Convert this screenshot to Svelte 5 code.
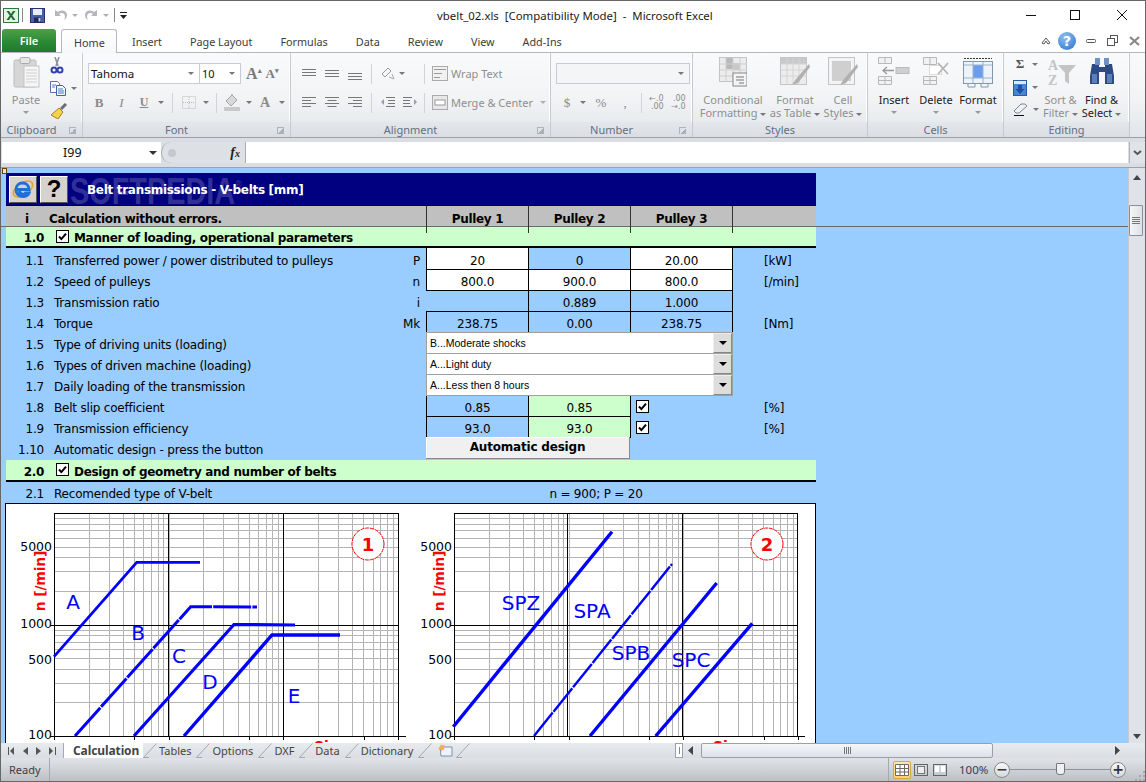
<script>
  const rows = [
    { n: '1.1', t: 'Transferred power / power distributed to pulleys', s: 'P', cells: [['20', 'w'], ['0', 'b'], ['20.00', 'w']], u: '[kW]' },
    { n: '1.2', t: 'Speed of pulleys', s: 'n', cells: [['800.0', 'w'], ['900.0', 'w'], ['800.0', 'w']], u: '[/min]' },
    { n: '1.3', t: 'Transmission ratio', s: 'i', cells: [['', 'x'], ['0.889', 'b'], ['1.000', 'b']], u: '' },
    { n: '1.4', t: 'Torque', s: 'Mk', cells: [['238.75', 'b'], ['0.00', 'b'], ['238.75', 'b']], u: '[Nm]' },
    { n: '1.5', t: 'Type of driving units (loading)', drop: 'B...Moderate shocks' },
    { n: '1.6', t: 'Types of driven machine (loading)', drop: 'A...Light duty' },
    { n: '1.7', t: 'Daily loading of the transmission', drop: 'A...Less then 8 hours' },
    { n: '1.8', t: 'Belt slip coefficient', cells: [['0.85', 'b'], ['0.85', 'g']], check: true, u: '[%]' },
    { n: '1.9', t: 'Transmission efficiency', cells: [['93.0', 'b'], ['93.0', 'g']], check: true, u: '[%]' },
    { n: '1.10', t: 'Automatic design - press the button', btn: 'Automatic design' }
  ]

  const tabs = ['Insert', 'Page Layout', 'Formulas', 'Data', 'Review', 'View', 'Add-Ins']
  const sheets = ['Tables', 'Options', 'DXF', 'Data', 'Dictionary']

  // log-log chart grid, page coordinates
  const TOP = 513
  const BOTTOM = 736
  const DECADE = 114.67
  const yOf = (n) => Math.round(BOTTOM - 111.5 * Math.log10(n / 100)) + 0.5
  const hLines = []
  for (const base of [100, 1000]) {
    for (let k = 1; k < 10; k++) hLines.push(yOf(base * k))
  }
  const vLines = (left) => {
    const out = []
    for (let d = 0; d < 3; d++) {
      for (let k = 1; k < 10; k++) out.push(Math.round(left + DECADE * (d + Math.log10(k))) + 0.5)
    }
    return out
  }

  const charts = [
    {
      left: 54, right: 398, num: '1', nx: 40, cx: 368, majors: [168.5, 283.5],
      lines: [
        { p: '54,656.7 136.7,562.3 200,562.3', w: 2.8 },
        { p: '75,736 190.7,606.7 257,607', w: 3, dash: '38 1.2' },
        { p: '134,736 234,624.5 295,625', w: 3.2 },
        { p: '184,736 272,635 340,635', w: 3.4 }
      ],
      labels: [['A', 73, 609], ['B', 138, 640], ['C', 179, 663], ['D', 210, 689], ['E', 294, 703]],
      size: 314
    },
    {
      left: 454, right: 797, num: '2', nx: 439, cx: 767, majors: [567.5, 682.5],
      lines: [
        { p: '453.3,726.7 612,531.7', w: 3.4 },
        { p: '534,736 672,564', w: 2.4, dash: '30 1.2' },
        { p: '590,736 716.7,583', w: 3.4 },
        { p: '655.7,736 752.3,623.3', w: 3.4 }
      ],
      labels: [['SPZ', 521, 610], ['SPA', 592, 618], ['SPB', 631, 660], ['SPC', 691, 667]],
      size: 713
    }
  ]
</script>

{#snippet check()}
  <svg class="chk" width="13" height="13" viewBox="0 0 13 13"><rect x=".5" y=".5" width="12" height="12" fill="#fff" stroke="#000"/><path d="M3 6.500l2.400 2.600L10 3.600" fill="none" stroke="#000" stroke-width="2"/></svg>
{/snippet}

{#snippet slash()}
  <svg class="slash" width="14" height="15" viewBox="0 0 14 15"><path d="M0.500 14.500L13.500 .5M.5 14.500H6" fill="none" stroke="#a3a8af"/></svg>
{/snippet}

<div class="win">
  <header class="title">
    <div class="qat">
      <svg class="xl" width="16" height="15" viewBox="0 0 16 15"><rect x=".5" y=".5" width="15" height="14" fill="#e4f2e2" stroke="#2c7a3a"/><path d="M3.500 3h2.600l1.900 3 1.900-3h2.600L9.300 7.500l3.200 4.500H9.900l-1.900-3-1.900 3H3.500l3.200-4.500z" fill="#1c6f2d"/></svg>
      <i class="qsep"></i>
      <svg class="save" width="15" height="15" viewBox="0 0 15 15"><rect x=".5" y=".5" width="14" height="14" fill="#4a5fae" stroke="#27316e"/><rect x="3" y="1" width="9" height="6" fill="#e8edf6"/><rect x="4" y="9.500" width="7" height="5" fill="#202a5c"/><rect x="8.500" y="10" width="2" height="3.500" fill="#c7cce0"/></svg>
      <svg class="undo" width="13" height="12" viewBox="0 0 13 12"><path d="M1 1v6h6L5 5c3-2 6-.5 6 3 0 1-.5 2-1 3 2-1 3-3 3-5 0-4-5-6-9-3z" fill="#b4b8bd"/></svg>
      <b class="dd d1"></b>
      <svg class="redo" width="13" height="12" viewBox="0 0 13 12"><path d="M12 1v6H6l2-2c-3-2-6-.5-6 3 0 1 .5 2 1 3-2-1-3-3-3-5 0-4 5-6 9-3z" fill="#b4b8bd"/></svg>
      <b class="dd d2"></b>
      <i class="qsep s2"></i>
      <svg class="cust" width="7" height="7" viewBox="0 0 7 7"><path d="M0 0h7v1H0zM0 3h7L3.500 7z" fill="#222"/></svg>
    </div>
    <div class="caption">vbelt_02.xls&nbsp; [Compatibility Mode]&nbsp; -&nbsp; Microsoft Excel</div>
    <div class="winbtns">
      <svg width="12" height="12" viewBox="0 0 12 12"><path d="M1 6.500h10" stroke="#111"/></svg>
      <svg width="12" height="12" viewBox="0 0 12 12"><rect x="1.500" y="1.500" width="9" height="9" fill="none" stroke="#111"/></svg>
      <svg class="cls" width="12" height="12" viewBox="0 0 12 12"><path d="M1 1l10 10M11 1L1 11" stroke="#111"/></svg>
    </div>
  </header>

  <nav class="tabs">
    <div class="file">File</div>
    <div class="tab on">Home</div>
    {#each tabs as t}
      <div class="tab">{t}</div>
    {/each}
    <div class="helpbtns">
      <svg class="caret" width="10" height="8" viewBox="0 0 10 8"><path d="M1 6l4-5 4 5-2 1-2-3-2 3z" fill="none" stroke="#555"/></svg>
      <span class="help">?</span>
      <svg width="10" height="8" viewBox="0 0 10 8"><rect x=".5" y="2.500" width="9" height="3" rx="1" fill="none" stroke="#555"/></svg>
      <svg width="11" height="11" viewBox="0 0 11 11"><rect x="3.500" y=".5" width="7" height="7" fill="#fff" stroke="#555"/><rect x=".5" y="3.500" width="7" height="7" fill="#fff" stroke="#555"/></svg>
      <svg width="11" height="10" viewBox="0 0 11 10"><path d="M1 1l9 8M10 1L1 9" stroke="#888" stroke-width="2.200"/></svg>
    </div>
  </nav>

  <div class="ribbon">
    <section class="grp g-clip">
      <div class="body clipb">
        <div class="big">
          <div class="ico"><svg width="27" height="31" viewBox="0 0 27 31"><rect x="1" y="3" width="22" height="27" rx="1.500" fill="#d6d6d6" stroke="#bcbcbc"/><rect x="7" y="0.500" width="10" height="6" rx="1.500" fill="#e6e6e6" stroke="#aaa"/><rect x="11" y="9" width="15" height="21" fill="#f6f6f6" stroke="#c4c4c4"/><path d="M13 13h11M13 16h11M13 19h11M13 22h11M13 25h11" stroke="#cfcfcf"/></svg></div>
          <span class="dim">Paste</span>
          <b class="dd mt"></b>
        </div>
        <div class="smalls">
          <svg width="14" height="17" viewBox="0 0 14 17"><path d="M5 0l3 9M9 0L6 9" stroke="#8a8f96" stroke-width="1.500"/><circle cx="4" cy="13" r="2.500" fill="none" stroke="#3340b0" stroke-width="2"/><circle cx="10" cy="13" r="2.500" fill="none" stroke="#3340b0" stroke-width="2"/></svg>
          <span class="rowi"><svg width="16" height="15" viewBox="0 0 16 15"><path d="M.5 .5h7l2 2v9H.5z" fill="#fff" stroke="#5d6ea8"/><path d="M6.500 4.500h6l3 3v7h-9z" fill="#f2f6fd" stroke="#3a66a8"/><path d="M2 4h4M2 6h3M8 8h5M8 10h6M8 12h6" stroke="#4d7cc0"/></svg><b class="dd"></b></span>
          <svg width="17" height="16" viewBox="0 0 17 16"><path d="M9 5l4 4-5 7-7-4z" fill="#f4d24c" stroke="#a0842a"/><path d="M11 6l5-5" stroke="#6a6a7a" stroke-width="3"/></svg>
        </div>
      </div>
      <div class="glabel lp">Clipboard<i class="launch"></i></div>
    </section>

    <section class="grp g-font">
      <div class="body stack">
        <div class="fontrow">
          <div class="combo c-name"><span>Tahoma</span><b class="dd"></b></div>
          <div class="combo c-size"><span>10</span><b class="dd"></b></div>
          <span class="grow">A<sup>▴</sup></span>
          <span class="shrink">A<sup>▾</sup></span>
        </div>
        <div class="fontfx">
          <span class="fx b">B</span>
          <span class="fx i">I</span>
          <span class="fx u">U</span>
          <b class="dd"></b>
          <i class="vsep"></i>
          <svg width="14" height="13" viewBox="0 0 14 13"><rect x=".5" y=".5" width="13" height="12" fill="none" stroke="#bbb" stroke-dasharray="1 1"/><path d="M7 1v11M1 6.500h12" stroke="#bbb" stroke-dasharray="1 1"/></svg>
          <b class="dd"></b>
          <i class="vsep"></i>
          <svg width="18" height="17" viewBox="0 0 18 17"><path d="M3 7l6-6 5 5-6 6z" fill="#d9d9d9" stroke="#a5a5a5"/><path d="M9 1V0" stroke="#999"/><rect x="1" y="13" width="16" height="4" fill="#c9c9c9"/></svg>
          <b class="dd"></b>
          <span class="fx ac">A</span>
          <b class="dd"></b>
        </div>
      </div>
      <div class="glabel lp">Font<i class="launch"></i></div>
    </section>

    <section class="grp g-align">
      <div class="body aligngrid">
        <svg class="al" width="14" height="9" viewBox="0 0 14 9"><path d="M0 .5h14M0 3.500h14M0 6.500h14" stroke="#777"/></svg>
        <svg class="al" width="14" height="9" viewBox="0 0 14 9"><path d="M0 1.500h14M0 4.500h14M0 7.500h14" stroke="#777"/></svg>
        <svg class="al low" width="14" height="9" viewBox="0 0 14 9"><path d="M0 2.500h14M0 5.500h14M0 8.500h14" stroke="#777"/></svg>
        <i class="vsep"></i>
        <svg width="14" height="14" viewBox="0 0 14 14"><path d="M1 7l6-6 3 3-6 6z" fill="none" stroke="#999"/><path d="M8 10l5 2-2-5" fill="none" stroke="#aaa"/></svg>
        <b class="dd lft"></b>
        <i class="vsep"></i>
        <div class="inl dim"><svg width="16" height="15" viewBox="0 0 16 15"><rect x=".5" y=".5" width="15" height="14" fill="#f1f1f1" stroke="#aaa"/><path d="M2 3.500h12M2 7.500h8M2 11.500h6" stroke="#999"/></svg><span>Wrap Text</span></div>

        <svg class="al" width="14" height="11" viewBox="0 0 14 11"><path d="M0 .5h14M0 3.500h9M0 6.500h14M0 9.500h9" stroke="#777"/></svg>
        <svg class="al" width="14" height="11" viewBox="0 0 14 11"><path d="M0 .5h14M2.500 3.500h9M0 6.500h14M2.500 9.500h9" stroke="#777"/></svg>
        <svg class="al" width="14" height="11" viewBox="0 0 14 11"><path d="M0 .5h14M5 3.500h9M0 6.500h14M5 9.500h9" stroke="#777"/></svg>
        <i class="vsep"></i>
        <svg width="14" height="11" viewBox="0 0 14 11"><path d="M5 .5h9M7 3.500h7M7 6.500h7M5 9.500h9" stroke="#777"/><path d="M0 5l3-3v6z" fill="#8aa0c0"/></svg>
        <svg width="14" height="11" viewBox="0 0 14 11"><path d="M0 .5h9M0 3.500h7M0 6.500h7M0 9.500h9" stroke="#777"/><path d="M14 5l-3-3v6z" fill="#8aa0c0"/></svg>
        <i class="vsep"></i>
        <div class="inl dim"><svg width="16" height="15" viewBox="0 0 16 15"><rect x=".5" y=".5" width="15" height="14" fill="#e8e8e8" stroke="#aaa"/><rect x="3" y="5" width="10" height="5" fill="#fff" stroke="#999"/></svg><span>Merge &amp; Center</span><b class="dd"></b></div>
      </div>
      <div class="glabel lp">Alignment<i class="launch"></i></div>
    </section>

    <section class="grp g-num">
      <div class="body stack">
        <div class="combo c-fmt"><span></span><b class="dd"></b></div>
        <div class="numfx">
          <span class="fx s">$</span>
          <b class="dd"></b>
          <span class="fx s">%</span>
          <span class="fx s">,</span>
          <i class="vsep"></i>
          <span class="dec">←.0<br/>.00</span>
          <span class="dec">.00<br/>→.0</span>
        </div>
      </div>
      <div class="glabel lp">Number<i class="launch"></i></div>
    </section>

    <section class="grp g-styles">
      <div class="body bigs">
        <div class="big dim">
          <div class="ico"><svg width="28" height="30" viewBox="0 0 28 30"><rect x=".5" y=".5" width="27" height="24" fill="#ececec" stroke="#c4c4c4"/><rect x="7" y="1" width="7" height="11" fill="#b9b9b9"/><rect x="14" y="6" width="7" height="7" fill="#c8c8c8"/><path d="M7 1v24M14 1v24M21 1v24M1 7h27M1 13h27M1 19h27" stroke="#cfcfcf"/><rect x="14" y="16" width="14" height="13" fill="#f4f4f4" stroke="#888"/><path d="M17 20h8M17 23h8M20 26h5" stroke="#777"/></svg></div>
          <span>Conditional</span>
          <span>Formatting <b class="dd"></b></span>
        </div>
        <div class="big dim">
          <div class="ico"><svg width="30" height="30" viewBox="0 0 30 30"><rect x=".5" y=".5" width="26" height="27" fill="#ececec" stroke="#c4c4c4"/><rect x="1" y="1" width="25" height="6" fill="#c9c9c9"/><path d="M7 1v27M13 1v27M19 1v27M1 7h26M1 13h26M1 19h26" stroke="#d4d4d4"/><path d="M29 7L16 22l-4 6 6-2L30 10z" fill="#b0b0b0"/></svg></div>
          <span>Format</span>
          <span>as Table <b class="dd"></b></span>
        </div>
        <div class="big dim">
          <div class="ico"><svg width="30" height="30" viewBox="0 0 30 30"><rect x=".5" y=".5" width="26" height="27" fill="#f4f4f4" stroke="#c4c4c4"/><rect x="4" y="4" width="19" height="20" fill="#cfcfcf"/><path d="M29 7L16 22l-4 6 6-2L30 10z" fill="#b0b0b0"/></svg></div>
          <span>Cell</span>
          <span>Styles <b class="dd"></b></span>
        </div>
      </div>
      <div class="glabel">Styles</div>
    </section>

    <section class="grp g-cells">
      <div class="body bigs">
        <div class="big">
          <div class="ico"><svg width="32" height="28" viewBox="0 0 32 28"><path d="M.5 .5h13v6h-13zM.5 6.500h13M7 .5v6M.5 19.500h13v8h-13zM.5 23.500h13M7 19.500v8" fill="#f2f2f2" stroke="#b8b8b8"/><rect x="18" y="10.500" width="13" height="6" fill="#cfcfcf" stroke="#bbb"/><path d="M16 13.500H6M9 10l-4 3.500 4 3.500" fill="none" stroke="#999" stroke-width="1.300"/></svg></div>
          <span>Insert</span>
          <b class="dd mt"></b>
        </div>
        <div class="big">
          <div class="ico"><svg width="26" height="28" viewBox="0 0 26 28"><path d="M.5 .5h13v7h-13zM7 .5v7M.5 19.500h13v8h-13zM.5 23.500h13M7 19.500v8" fill="#f2f2f2" stroke="#b8b8b8"/><rect x="6.500" y="8.500" width="12" height="9" fill="#fff" stroke="#bbb" stroke-dasharray="1 1"/><path d="M15 17L25 6M15 6l10 11" stroke="#b5b5b5" stroke-width="1.800"/></svg></div>
          <span>Delete</span>
          <b class="dd mt"></b>
        </div>
        <div class="big">
          <div class="ico"><svg width="30" height="31" viewBox="0 0 30 31"><path d="M1 1.500h28" stroke="#333" stroke-dasharray="2 1"/><rect x=".5" y="4.500" width="29" height="22" fill="#edf3fa" stroke="#8097b0"/><rect x="10" y="8" width="10" height="13" fill="#6a9df0"/><path d="M10 5v21M20 5v21M1 8h28M1 21h28" stroke="#9db2c9"/><path d="M5 27v3h7v-3M18 27v3h7v-3" fill="none" stroke="#8097b0"/></svg></div>
          <span>Format</span>
          <b class="dd mt"></b>
        </div>
      </div>
      <div class="glabel">Cells</div>
    </section>

    <section class="grp g-edit">
      <div class="body bigs">
        <div class="smalls edits">
          <span class="rowi"><span class="sigma">Σ</span><b class="dd"></b></span>
          <span class="rowi"><svg width="14" height="16" viewBox="0 0 14 16"><rect x=".5" y=".5" width="13" height="15" fill="#4a84d4" stroke="#2c5ca0"/><rect x="1" y="1" width="12" height="3" fill="#dde8f6"/><path d="M5 5h4v4h2.500L7 14 2.500 9H5z" fill="#1f4ea3"/></svg><b class="dd"></b></span>
          <span class="rowi"><svg width="15" height="13" viewBox="0 0 15 13"><path d="M1 8l7-7h4l2 2-8 7H3z" fill="#eef1f5" stroke="#7b8798"/><path d="M1 12.500h10" stroke="#111"/></svg><b class="dd"></b></span>
        </div>
        <div class="big dim">
          <div class="ico"><svg width="30" height="30" viewBox="0 0 30 30"><text x="2" y="13" class="az">A</text><text x="2" y="28" class="az">Z</text><path d="M12 8h18l-7 8v11l-4-3v-8z" fill="#c4c4c4"/></svg></div>
          <span>Sort &amp;</span>
          <span>Filter <b class="dd"></b></span>
        </div>
        <div class="big">
          <div class="ico"><svg width="26" height="28" viewBox="0 0 26 28"><path d="M3 7h7v3h6V7h7l2 12v8H16V15h-6v12H1v-8z" fill="#2d4a86"/><path d="M6 1h5v7H6zM15 1h5v7h-5z" fill="#7091c4"/><path d="M3 17h5v9H3zM18 17h5v9h-5z" fill="#5c7fb8"/></svg></div>
          <span>Find &amp;</span>
          <span>Select <b class="dd"></b></span>
        </div>
      </div>
      <div class="glabel">Editing</div>
    </section>
  </div>

  <div class="formula">
    <div class="name"><span>I99</span><b class="dd"></b></div>
    <div class="fxzone"><i class="knob"></i><span class="fxl">f<small>x</small></span></div>
    <div class="input"></div>
    <div class="expand"><svg width="9" height="6" viewBox="0 0 9 6"><path d="M1 1l3.500 3L8 1" fill="none" stroke="#555" stroke-width="2"/></svg></div>
  </div>

  <main class="sheet">
    <div class="pane">
      <i class="handle"></i>
      <div class="frozen">
        <div class="book">
          <div class="navy">
            <span class="wm">SOFTPEDIA<sup>®</sup></span>
            <div class="tool"><svg width="24" height="24" viewBox="0 0 24 24"><ellipse cx="12" cy="12" rx="11" ry="6" transform="rotate(-35 12 12)" fill="none" stroke="#e9a12c" stroke-width="1.600"/><path d="M5 12.500h13c0-4-3-6.500-6.500-6.500S5 8.500 5 12.500c0 4.500 3 7 7 7 3 0 5-1 6-3.500h-3.500c-.6 1-1.500 1.300-2.500 1.300-2 0-3.300-1.300-3.500-3.300" fill="none" stroke="#1f6fd6" stroke-width="3"/></svg></div>
            <div class="tool q">?</div>
            <span class="ttl">Belt transmissions - V-belts [mm]</span>
          </div>
          <div class="grid hdr">
            <span class="hi">i</span>
            <span class="hc">Calculation without errors.</span>
            <span class="pl">Pulley 1</span>
            <span class="pl">Pulley 2</span>
            <span class="pl">Pulley 3</span>
            <span class="pl"></span>
          </div>
        </div>
      </div>
      <div class="book">
        <div class="sect">
          <span class="sn">1.0</span>
          {@render check()}
          <span>Manner of loading, operational parameters</span>
        </div>
        {#each rows as r, idx}
          <div class="grid row" class:first={idx === 0}>
            <span class="num">{r.n}</span>
            <div class="lab"><span>{r.t}</span><span>{r.s ?? ''}</span></div>
            {#if r.drop}
              <div class="drop"><span>{r.drop}</span><i class="dbtn"><b class="tri"></b></i></div>
            {:else if r.btn}
              <div class="abtn">{r.btn}</div>
            {:else}
              {#each r.cells as c}
                <div class="cell {c[1]}">{c[0]}</div>
              {/each}
              {#if r.check}
                <div class="ck">{@render check()}</div>
              {/if}
              <div class="unit">{r.u}</div>
            {/if}
          </div>
        {/each}
        <div class="sect s2">
          <span class="sn">2.0</span>
          {@render check()}
          <span>Design of geometry and number of belts</span>
        </div>
        <div class="rec">
          <span class="num">2.1</span>
          <span class="rect">Recomended type of V-belt</span>
          <span class="recv">n = 900; P = 20</span>
        </div>
        <div class="plot">
          <svg width="810" height="260" viewBox="6 504 810 260">
            {#each charts as c}
              <g class="gridl">
                {#each hLines as y}<line x1={c.left} x2={c.right} y1={y} y2={y}/>{/each}
                {#each vLines(c.left) as x}<line x1={x} x2={x} y1={TOP} y2={BOTTOM}/>{/each}
              </g>
              <g class="axes">
                <rect x={c.left + 0.5} y={TOP + 0.5} width={c.right - c.left} height={BOTTOM - TOP} fill="none"/>
                <line x1={c.left - 4} x2={c.right} y1={yOf(1000)} y2={yOf(1000)}/>
                <line x1={c.majors[0]} x2={c.majors[0]} y1={TOP} y2={BOTTOM}/>
                <line x1={c.majors[1]} x2={c.majors[1]} y1={TOP} y2={BOTTOM}/>
                <line x1={c.left - 4} x2={c.right + 8} y1={BOTTOM + 0.5} y2={BOTTOM + 0.5}/>
                {#each [0, 0.7, 1, 1.7, 2, 2.7, 3] as d}
                  <line x1={Math.round(c.left + d * DECADE) + 0.5} x2={Math.round(c.left + d * DECADE) + 0.5} y1={BOTTOM} y2={BOTTOM + 4}/>
                {/each}
              </g>
              {#each c.lines as l}
                <polyline points={l.p} fill="none" stroke="#0000ff" stroke-width={l.w} stroke-dasharray={l.dash}/>
              {/each}
              {#each c.labels as t}
                <text x={t[1]} y={t[2]} class="curve">{t[0]}</text>
              {/each}
              <text x={c.left} y="550.500" class="ytick" dx="-2">5000</text>
              <text x={c.left} y="628" class="ytick" dx="-2">1000</text>
              <text x={c.left} y="663.500" class="ytick" dx="-2">500</text>
              <text x={c.left} y="739" class="ytick" dx="-2">100</text>
              <text class="yaxis" transform="translate({c.nx + 5} 581) rotate(-90)">n [/min]</text>
              <circle cx={c.cx} cy="544" r="16" class="badge"/>
              <text x={c.cx} y="550.500" class="badgen">{c.num}</text>
              <text x={c.size} y="751" class="xaxis">Size</text>
            {/each}
          </svg>
        </div>
      </div>
    </div>
    <aside class="vscroll">
      <div class="arrow"><b class="up"></b></div>
      <div class="thumb"><i></i><i></i><i></i><i></i></div>
      <div class="arrow end"><b class="down"></b></div>
    </aside>
  </main>

  <div class="sheetbar">
    <div class="navbtns">
      <svg width="7" height="8" viewBox="0 0 7 8"><path d="M0 0h1v8H0zM6 0v8L2 4z" fill="#555"/></svg>
      <svg width="5" height="8" viewBox="0 0 5 8"><path d="M5 0v8L0 4z" fill="#555"/></svg>
      <svg width="5" height="8" viewBox="0 0 5 8"><path d="M0 0v8l5-4z" fill="#555"/></svg>
      <svg width="7" height="8" viewBox="0 0 7 8"><path d="M6 0h1v8H6zM0 0v8l4-4z" fill="#555"/></svg>
    </div>
    <div class="stab cur">Calculation</div>
    {@render slash()}
    {#each sheets as s}
      <div class="stab">{s}</div>
      {@render slash()}
    {/each}
    <svg class="newsheet" width="15" height="14" viewBox="0 0 15 14"><path d="M2 4h12v9H3z" fill="#eef3f9" stroke="#7a92b0"/><path d="M3.500 .5l1 2 2-1-.7 2.200 2.200.8-2.200.8.700 2.200-2-1-1 2-1-2-2 1 .7-2.200L.5 4.500l2.200-.8L2 1.500l2 1z" fill="#f0b43c"/></svg>
    {@render slash()}
    <div class="split"><i></i></div>
    <svg class="harrow l" width="5" height="9" viewBox="0 0 5 9"><path d="M5 0v9L0 4.500z" fill="#444"/></svg>
    <div class="hthumb"><i></i><i></i><i></i><i></i></div>
    <svg class="harrow r" width="5" height="9" viewBox="0 0 5 9"><path d="M0 0v9l5-4.500z" fill="#444"/></svg>
  </div>

  <footer class="status">
    <div class="ready">Ready</div>
    <div class="right">
      <div class="vbtn on"><svg width="14" height="12" viewBox="0 0 14 12"><path d="M.5 .5h13v11H.5zM.5 4.500h13M.5 8h13M5 .5v11M9.500 .5v11" fill="#fff" stroke="#6a6a6a"/></svg></div>
      <svg class="v2" width="14" height="12" viewBox="0 0 14 12"><rect x=".5" y=".5" width="13" height="11" fill="none" stroke="#666"/><rect x="3.500" y="2.500" width="7" height="7" fill="#eee" stroke="#777"/></svg>
      <svg class="v3" width="14" height="12" viewBox="0 0 14 12"><rect x=".5" y=".5" width="13" height="11" fill="none" stroke="#666"/><rect x="2" y="2" width="4" height="6" fill="#fff"/><rect x="8" y="2" width="4" height="6" fill="#fff"/></svg>
      <span class="zoom">100%</span>
      <span class="round">−</span>
      <div class="slider"><i class="knob2"></i></div>
      <span class="round">+</span>
      <svg class="gripper" width="10" height="10" viewBox="0 0 10 10"><path d="M8 0h2v2H8zM4 4h2v2H4zM8 4h2v2H8zM0 8h2v2H0zM4 8h2v2H4zM8 8h2v2H8z" fill="#a5a8ac"/></svg>
    </div>
  </footer>
</div>

<style>
  :global(body) {
    margin: 0;
    background: #fff;
  }
  .win {
    box-sizing: border-box;
    width: 1146px;
    height: 782px;
    border: 1px solid #666;
    display: flex;
    flex-direction: column;
    overflow: hidden;
    font-family: "Noto Sans", "Open Sans", sans-serif;
    font-size: 11px;
    color: #333;
    background: #fff;
  }
  .dd {
    display: inline-block;
    width: 0;
    height: 0;
    border: 3px solid transparent;
    border-top: 3.5px solid #777;
    border-bottom: 0;
    vertical-align: middle;
  }
  .mt { margin-top: 5px; border-top-color: #999; }
  .dim { color: #8f8f8f; }

  .title {
    height: 28px;
    display: flex;
    align-items: center;
    flex: none;
    position: relative;
  }
  .qat {
    display: flex;
    align-items: center;
    padding-left: 2px;
    width: 130px;
  }
  .qsep { width: 1px; height: 14px; background: #888; margin: 0 7px 0 3px; }
  .qsep.s2 { margin: 0 5px 0 5px; }
  .undo { margin-left: 9px; }
  .d1 { margin: 0 7px 0 5px; border-top-color: #b0b0b0; }
  .d2 { margin-left: 5px; border-top-color: #b0b0b0; }
  .caption {
    margin-left: 304px;
    font-size: 11.400px;
    color: #1a1a1a;
    white-space: nowrap;
  }
  .winbtns {
    margin-left: auto;
    display: flex;
    gap: 32px;
    padding-right: 17px;
  }
  .cls { margin-left: 3px; }

  .tabs {
    height: 24px;
    flex: none;
    display: flex;
    align-items: stretch;
    border-bottom: 1px solid #b4b8be;
    box-sizing: border-box;
  }
  .file {
    width: 54px;
    margin-left: 1px;
    height: 23px;
    background: linear-gradient(#4fa04a, #2a8a34 55%, #1f7a2c);
    border-radius: 3px 3px 0 0;
    color: #fff;
    font-weight: 600;
    text-align: center;
    line-height: 24px;
  }
  .tab {
    padding: 0 14px;
    line-height: 25px;
    font-size: 10.800px;
    white-space: nowrap;
    color: #3c3c3c;
  }
  .tab.on {
    margin-left: 5px;
    padding: 0 12px;
    margin-bottom: -1px;
    background: linear-gradient(#fff, #f6f7f8);
    border: 1px solid #b4b8be;
    border-bottom: 0;
    border-radius: 3px 3px 0 0;
    box-sizing: border-box;
    height: 24px;
    width: 56px;
    margin-right: 1px;
  }
  .helpbtns {
    margin-left: auto;
    display: flex;
    align-items: center;
    gap: 11px;
    padding-right: 5px;
  }
  .caret { margin-right: -3px; }
  .help {
    width: 18px;
    height: 18px;
    margin: 0 -1px;
    border-radius: 50%;
    background: radial-gradient(circle at 40% 30%, #8cc0f4, #2a6fc8);
    color: #fff;
    font: bold 14px/18px "DejaVu Sans", sans-serif;
    text-align: center;
  }

  .ribbon {
    height: 85px;
    flex: none;
    display: flex;
    background: linear-gradient(#f9fafb, #f1f3f5 55%, #e2e5e9);
    border-bottom: 1px solid #9ea2a8;
    box-sizing: border-box;
  }
  .grp {
    box-sizing: border-box;
    display: flex;
    flex-direction: column;
    border-right: 1px solid #c6cad0;
    box-shadow: inset -1px 0 0 #fff;
    flex: none;
  }
  .g-clip { width: 82px; }
  .g-font { width: 208px; }
  .g-align { width: 260px; }
  .g-num { width: 142px; }
  .g-styles { width: 175px; }
  .g-cells { width: 136px; }
  .g-edit { width: 126px; }
  .body { flex: 1; min-height: 0; }
  .glabel {
    height: 15px;
    line-height: 16px;
    flex: none;
    text-align: center;
    position: relative;
    color: #62707f;
    background: linear-gradient(#e4e7eb, #dadde2);
  }
  .glabel.lp { padding-right: 20px; }
  .launch {
    position: absolute;
    right: 6px;
    top: 5px;
    width: 6px;
    height: 6px;
    border: 1px solid #b0b4ba;
    border-width: 1px 0 0 1px;
    background: linear-gradient(135deg, transparent 50%, #aab0b8 50%);
  }

  .clipb { display: flex; padding-left: 6px; }
  .big {
    display: flex;
    flex-direction: column;
    align-items: center;
    padding-top: 4px;
    line-height: 13px;
    white-space: nowrap;
  }
  .ico {
    height: 36px;
    display: flex;
    justify-content: center;
    align-items: flex-start;
  }
  .clipb .big { width: 38px; }
  .smalls {
    display: flex;
    flex-direction: column;
    align-items: flex-start;
    justify-content: space-between;
    padding: 4px 0 3px 5px;
    height: 62px;
  }
  .rowi { display: flex; align-items: center; gap: 5px; }
  .stack { padding: 10px 0 0 5px; }
  .fontrow { display: flex; align-items: center; height: 21px; }
  .combo {
    box-sizing: border-box;
    height: 21px;
    display: flex;
    justify-content: space-between;
    align-items: center;
    background: #fff;
    border: 1px solid #c8ccd2;
    padding: 0 5px 0 2px;
    color: #111;
  }
  .c-name { width: 112px; font-size: 11.500px; }
  .c-size { width: 42px; margin-left: -1px; }
  .c-fmt { width: 134px; background: #f4f5f6; }
  .grow, .shrink {
    font: bold 16px/16px "Liberation Serif", serif;
    color: #7a7a7a;
    margin-left: 5px;
  }
  .shrink { font-size: 13px; margin-left: 4px; }
  .grow sup, .shrink sup { font-size: 7px; line-height: 0; }
  .fontfx {
    display: grid;
    grid-template-columns: 22px 23px 22px 12px 10px 23px 11px 10px 22px 11px 22px 11px;
    justify-items: center;
    align-items: center;
    height: 21px;
    margin-top: 8px;
  }
  .fx { color: #8a8a8a; font: 12px "Liberation Serif", serif; }
  .fx.b { font-weight: bold; font-size: 13px; }
  .fx.i { font-style: italic; font-size: 13px; }
  .fx.u { text-decoration: underline; font-weight: bold; }
  .fx.ac { font-weight: bold; font-size: 14px; }
  .fx.s { font-size: 13px; }
  .vsep { width: 1px; height: 20px; background: #d0d3d8; display: block; }
  .aligngrid {
    display: grid;
    grid-template-columns: 23px 23px 23px 10px 23px 22px 6px 120px;
    grid-template-rows: 21px 21px;
    row-gap: 8px;
    padding: 10px 0 0 6px;
    justify-items: center;
    align-items: center;
  }
  .al.low { margin-top: 4px; }
  .lft { justify-self: start; }
  .inl {
    justify-self: start;
    display: flex;
    align-items: center;
    gap: 3px;
    margin-left: 5px;
    white-space: nowrap;
  }
  .inl .dd { margin-left: 4px; border-top-color: #b0b0b0; }
  .numfx {
    display: grid;
    grid-template-columns: 22px 10px 26px 22px 10px 21px 23px;
    justify-items: center;
    align-items: center;
    height: 21px;
    margin-top: 8px;
    width: 134px;
  }
  .dec { font: 8px/8px "DejaVu Sans", sans-serif; color: #8a8a8a; text-align: right; }
  .bigs { display: flex; }
  .g-styles .bigs { padding-left: 7px; }
  .g-styles .big:nth-child(1) { width: 66px; }
  .g-styles .big:nth-child(2) { width: 58px; }
  .g-styles .big:nth-child(3) { width: 38px; }
  .g-cells .bigs { padding-left: 5px; }
  .g-cells .big { width: 42px; color: #222; }
  .g-edit .bigs { padding-left: 6px; }
  .edits { width: 30px; padding: 3px 0 3px 3px; box-sizing: border-box; height: 66px; }
  .g-edit .big { width: 41px; color: #222; }
  .g-edit .big.dim { color: #8f8f8f; }
  .sigma { font: bold 13px "Liberation Serif", serif; color: #555; width: 14px; text-align: center; }
  .az { font: bold 14px "Liberation Serif", serif; fill: #c4c4c4; }

  .formula {
    height: 30px;
    flex: none;
    display: flex;
    box-sizing: border-box;
    padding: 4px 0 4px 1px;
    background: #dadde1;
    border-bottom: 1px solid #9ea2a8;
    align-items: stretch;
  }
  .name {
    width: 159px;
    background: #fff;
    display: flex;
    align-items: center;
    color: #111;
    font-size: 12.500px;
    box-sizing: border-box;
    justify-content: space-between;
    padding: 0 4px 0 61px;
  }
  .name .dd { border-top-color: #333; border-width: 4px 4px 0; }
  .fxzone {
    width: 84px;
    background: #dde0e4;
    border: 1px solid #a8acb2;
    border-width: 0 0 0 1px;
    border-radius: 10px 0 0 10px;
    box-sizing: border-box;
    display: flex;
    align-items: center;
    justify-content: space-between;
    padding: 0 5px 0 6px;
  }
  .knob { width: 8px; height: 8px; border-radius: 50%; background: #c5c8cd; }
  .fxl { font: italic bold 14px "Liberation Serif", serif; color: #222; }
  .fxl small { font-size: 10px; }
  .input { flex: 1; background: #fff; border-left: 1px solid #a8acb2; }
  .expand {
    width: 15px;
    margin-left: 1px;
    display: flex;
    align-items: center;
    justify-content: center;
    background: #e0e3e7;
    border-left: 1px solid #b0b4ba;
  }

  .sheet {
    height: 575px;
    flex: none;
    display: flex;
    overflow: hidden;
    background: #99ccff;
  }
  .pane {
    flex: 1;
    min-width: 0;
    position: relative;
    overflow: hidden;
    padding-top: 5px;
  }
  .handle {
    position: absolute;
    z-index: 2;
    left: 1px;
    top: 0;
    width: 3px;
    height: 4px;
    border: 1px solid #6e4208;
    background: #f4e4b8;
  }
  .frozen { border-bottom: 1px solid #6a6a6a; }
  .book {
    width: 810px;
    margin-left: 5px;
    font-family: "DejaVu Sans", sans-serif;
    font-size: 12px;
    letter-spacing: -0.2px;
    color: #000;
  }
  .navy {
    height: 33px;
    box-sizing: border-box;
    background: #000080;
    border-bottom: 1px solid #000;
    display: flex;
    align-items: center;
    position: relative;
    overflow: hidden;
    padding-left: 3px;
    gap: 3px;
  }
  .wm {
    position: absolute;
    left: 64px;
    top: 0;
    font: bold 37px/37px "Liberation Sans", sans-serif;
    letter-spacing: 0;
    white-space: nowrap;
    transform: scaleX(0.78);
    transform-origin: 0 0;
    color: rgba(255, 255, 255, 0.2);
  }
  .wm sup { font-size: 11px; line-height: 0; vertical-align: 16px; }
  .tool {
    width: 28px;
    height: 27px;
    box-sizing: border-box;
    background: #d6d3ce;
    border: 1px solid;
    border-color: #fff #555 #555 #fff;
    display: flex;
    align-items: center;
    justify-content: center;
    position: relative;
  }
  .tool.q { font: bold 24px "Liberation Sans", sans-serif; color: #000; }
  .ttl {
    position: relative;
    margin-left: 16px;
    color: #fff;
    font-weight: bold;
    font-size: 12px;
    letter-spacing: -0.3px;
    padding-top: 1px;
  }
  .grid {
    display: grid;
    grid-template-columns: 38px 382px 102px 102px 102px 84px;
  }
  .hdr {
    height: 20px;
    background: #c0c0c0;
    font-weight: bold;
    line-height: 27px;
    letter-spacing: -0.33px;
  }
  .hi { padding-left: 19px; }
  .hc { padding-left: 5px; white-space: nowrap; }
  .pl {
    border-left: 1px solid #333;
    text-align: center;
    font-weight: bold;
  }
  .sect {
    height: 21px;
    box-sizing: border-box;
    background: #ccffcc;
    border-bottom: 2px solid #000;
    padding-top: 3px;
    display: flex;
    align-items: center;
    font-weight: bold;
    letter-spacing: -0.33px;
    white-space: nowrap;
  }
  .sect.s2 { margin-top: 2px; height: 22px; padding-top: 4px; }
  .sn { width: 38px; text-align: right; margin-right: 12px; }
  .sect .chk { margin: -3px 5px 0 0; }
  .sect.s2 .chk { margin-top: -6px; }
  .row { height: 21px; }
  .num {
    text-align: right;
    line-height: 27px;
  }
  .lab {
    display: flex;
    justify-content: space-between;
    padding: 0 6px 0 10px;
    line-height: 27px;
    white-space: nowrap;
  }
  .cell {
    box-sizing: border-box;
    border: 1px solid #000;
    margin: 0 -1px -1px 0;
    text-align: center;
    line-height: 25px;
    height: 22px;
  }
  .row.first .cell { border-top: 0; height: 22px; line-height: 26px; }
  .cell.w { background: #fff; }
  .cell.g { background: #ccffcc; }
  .cell.x { border-color: transparent; }
  .ck { padding: 5px 0 0 6px; height: 13px; }
  .ck .chk { display: block; }
  .unit { padding-left: 32px; line-height: 27px; }
  .drop {
    grid-column: span 3;
    box-sizing: border-box;
    height: 22px;
    background: #fff;
    border: 1px solid #a0a0a0;
    margin-right: -1px;
    margin-bottom: -1px;
    display: flex;
    justify-content: space-between;
    font-family: "Liberation Sans", sans-serif;
    letter-spacing: 0;
    font-size: 10.500px;
    line-height: 20px;
    padding-left: 3px;
    position: relative;
  }
  .dbtn {
    width: 19px;
    background: #ddd;
    border: 1px solid;
    border-color: #eee #888 #888 #eee;
    box-sizing: border-box;
    display: flex;
    align-items: center;
    justify-content: center;
  }
  .tri, .up, .down {
    width: 0;
    height: 0;
    border: 4px solid transparent;
    border-top: 4px solid #000;
    border-bottom: 0;
  }
  .abtn {
    grid-column: span 2;
    height: 22px;
    box-sizing: border-box;
    background: #f0f0f0;
    border-bottom: 1px solid #888;
    border-right: 1px solid #888;
    box-shadow: inset 1px 1px 0 #fff;
    text-align: center;
    font-weight: bold;
    line-height: 20px;
    position: relative;
  }
  .rec {
    height: 21px;
    display: grid;
    grid-template-columns: 38px 10px 1fr 306px;
    line-height: 25px;
  }
  .rec .num { line-height: 25px; }
  .rec .rect { grid-column: 3; }
  .recv { text-align: center; padding-right: 134px; white-space: nowrap; }
  .plot {
    box-sizing: border-box;
    margin-left: -1px;
    width: 811px;
    border: 1px solid #000;
    border-bottom: 0;
    background: #fff;
    height: 260px;
  }
  .plot svg { display: block; font-family: "DejaVu Sans", sans-serif; letter-spacing: 0; }
  .gridl line { stroke: #b4b4b4; stroke-width: 1; }
  .axes rect, .axes line { stroke: #000; stroke-width: 1; }
  .curve { font-size: 20px; fill: #0000ff; text-anchor: middle; }
  .ytick { font-size: 12.500px; fill: #000; text-anchor: end; }
  .yaxis { font-size: 14px; font-weight: bold; fill: #f00; text-anchor: middle; letter-spacing: -0.2px; }
  .badge { fill: #fff; stroke: #f00; stroke-width: 1; stroke-dasharray: 4 0.8; }
  .badgen { font-size: 18px; font-weight: bold; fill: #f00; text-anchor: middle; }
  .xaxis { font-size: 14px; font-weight: bold; fill: #f00; }

  .vscroll {
    width: 16px;
    flex: none;
    background: #dfe3e9;
    display: flex;
    flex-direction: column;
    border-left: 1px solid #c6cad0;
  }
  .arrow {
    height: 18px;
    display: flex;
    align-items: center;
    justify-content: center;
  }
  .arrow.end { margin-top: auto; height: 14px; }
  .up {
    border-top: 0;
    border-bottom: 5px solid #444;
  }
  .down { border-top: 5px solid #444; }
  .thumb {
    margin: 19px 2px 0 0;
    height: 31px;
    box-sizing: border-box;
    border: 1px solid #8a8f98;
    border-radius: 1px;
    background: linear-gradient(90deg, #f4f6f8, #dde1e7);
    display: flex;
    flex-direction: column;
    justify-content: center;
    align-items: center;
    gap: 1px;
  }
  .thumb i { width: 8px; height: 1px; background: #777; }

  .sheetbar {
    height: 15px;
    flex: none;
    display: flex;
    align-items: stretch;
    background: linear-gradient(#e8ebee, #dadde2);
    color: #444;
    line-height: 16px;
  }
  .navbtns {
    width: 63px;
    box-sizing: border-box;
    display: flex;
    justify-content: space-between;
    align-items: center;
    padding: 0 7px;
    border-right: 1px solid #a5a9af;
  }
  .stab { padding: 0 5px 0 2px; white-space: nowrap; }
  .stab.cur {
    background: #fff;
    font-weight: bold;
    font-size: 12px;
    letter-spacing: -0.1px;
    width: 79px;
    box-sizing: border-box;
    padding: 0 0 0 9px;
  }
  .slash { flex: none; }
  .newsheet { margin: 0 3px 0 6px; }
  .split {
    margin-left: 205px;
    width: 8px;
    background: #fff;
    border: 1px solid #9ca0a6;
    box-sizing: border-box;
    display: flex;
    justify-content: center;
  }
  .split i { width: 1px; background: #888; margin: 3px 0; }
  .harrow { align-self: center; }
  .harrow.l { margin: 0 8px 0 5px; }
  .hthumb {
    width: 292px;
    box-sizing: border-box;
    border: 1px solid #9ca0a6;
    border-radius: 2px;
    background: linear-gradient(#f4f6f8, #dde1e7);
    display: flex;
    justify-content: center;
    align-items: center;
    gap: 1px;
  }
  .hthumb i { width: 1px; height: 7px; background: #777; }
  .harrow.r { margin-left: 122px; }

  .status {
    height: 23px;
    flex: none;
    display: flex;
    align-items: center;
    background: linear-gradient(#e0e3e7, #bdc1c6);
    color: #3e3e3e;
  }
  .ready {
    width: 49px;
    box-sizing: border-box;
    padding-left: 8px;
    border-right: 1px solid #a5a9af;
    height: 23px;
    line-height: 23px;
  }
  .right {
    margin-left: auto;
    width: 257px;
    box-sizing: border-box;
    height: 23px;
    display: flex;
    align-items: center;
    border-left: 1px solid #a5a9af;
    padding-left: 4px;
    position: relative;
  }
  .vbtn {
    width: 18px;
    height: 18px;
    box-sizing: border-box;
    background: linear-gradient(#fde9a8, #fbd46e);
    border: 1px solid #d9a83c;
    border-radius: 2px;
    display: flex;
    align-items: center;
    justify-content: center;
  }
  .v2 { margin-left: 3px; }
  .v3 { margin-left: 5px; }
  .zoom { margin-left: 12px; width: 35px; color: #3a3a5a; font-size: 11.500px; }
  .round {
    width: 16px;
    height: 16px;
    box-sizing: border-box;
    border-radius: 50%;
    background: linear-gradient(#f8f9fa, #d5d8dc);
    border: 1px solid #888;
    text-align: center;
    font: bold 14px/13px "DejaVu Sans", sans-serif;
    color: #333;
  }
  .slider {
    width: 100px;
    height: 1px;
    background: #8e9298;
    position: relative;
  }
  .knob2 {
    position: absolute;
    left: 46px;
    top: -6px;
    width: 9px;
    height: 12px;
    background: #eef0f3;
    border: 1px solid #777;
    border-radius: 1px 1px 3px 3px;
    box-sizing: border-box;
  }
  .gripper { margin-left: 9px; align-self: flex-end; }
</style>
